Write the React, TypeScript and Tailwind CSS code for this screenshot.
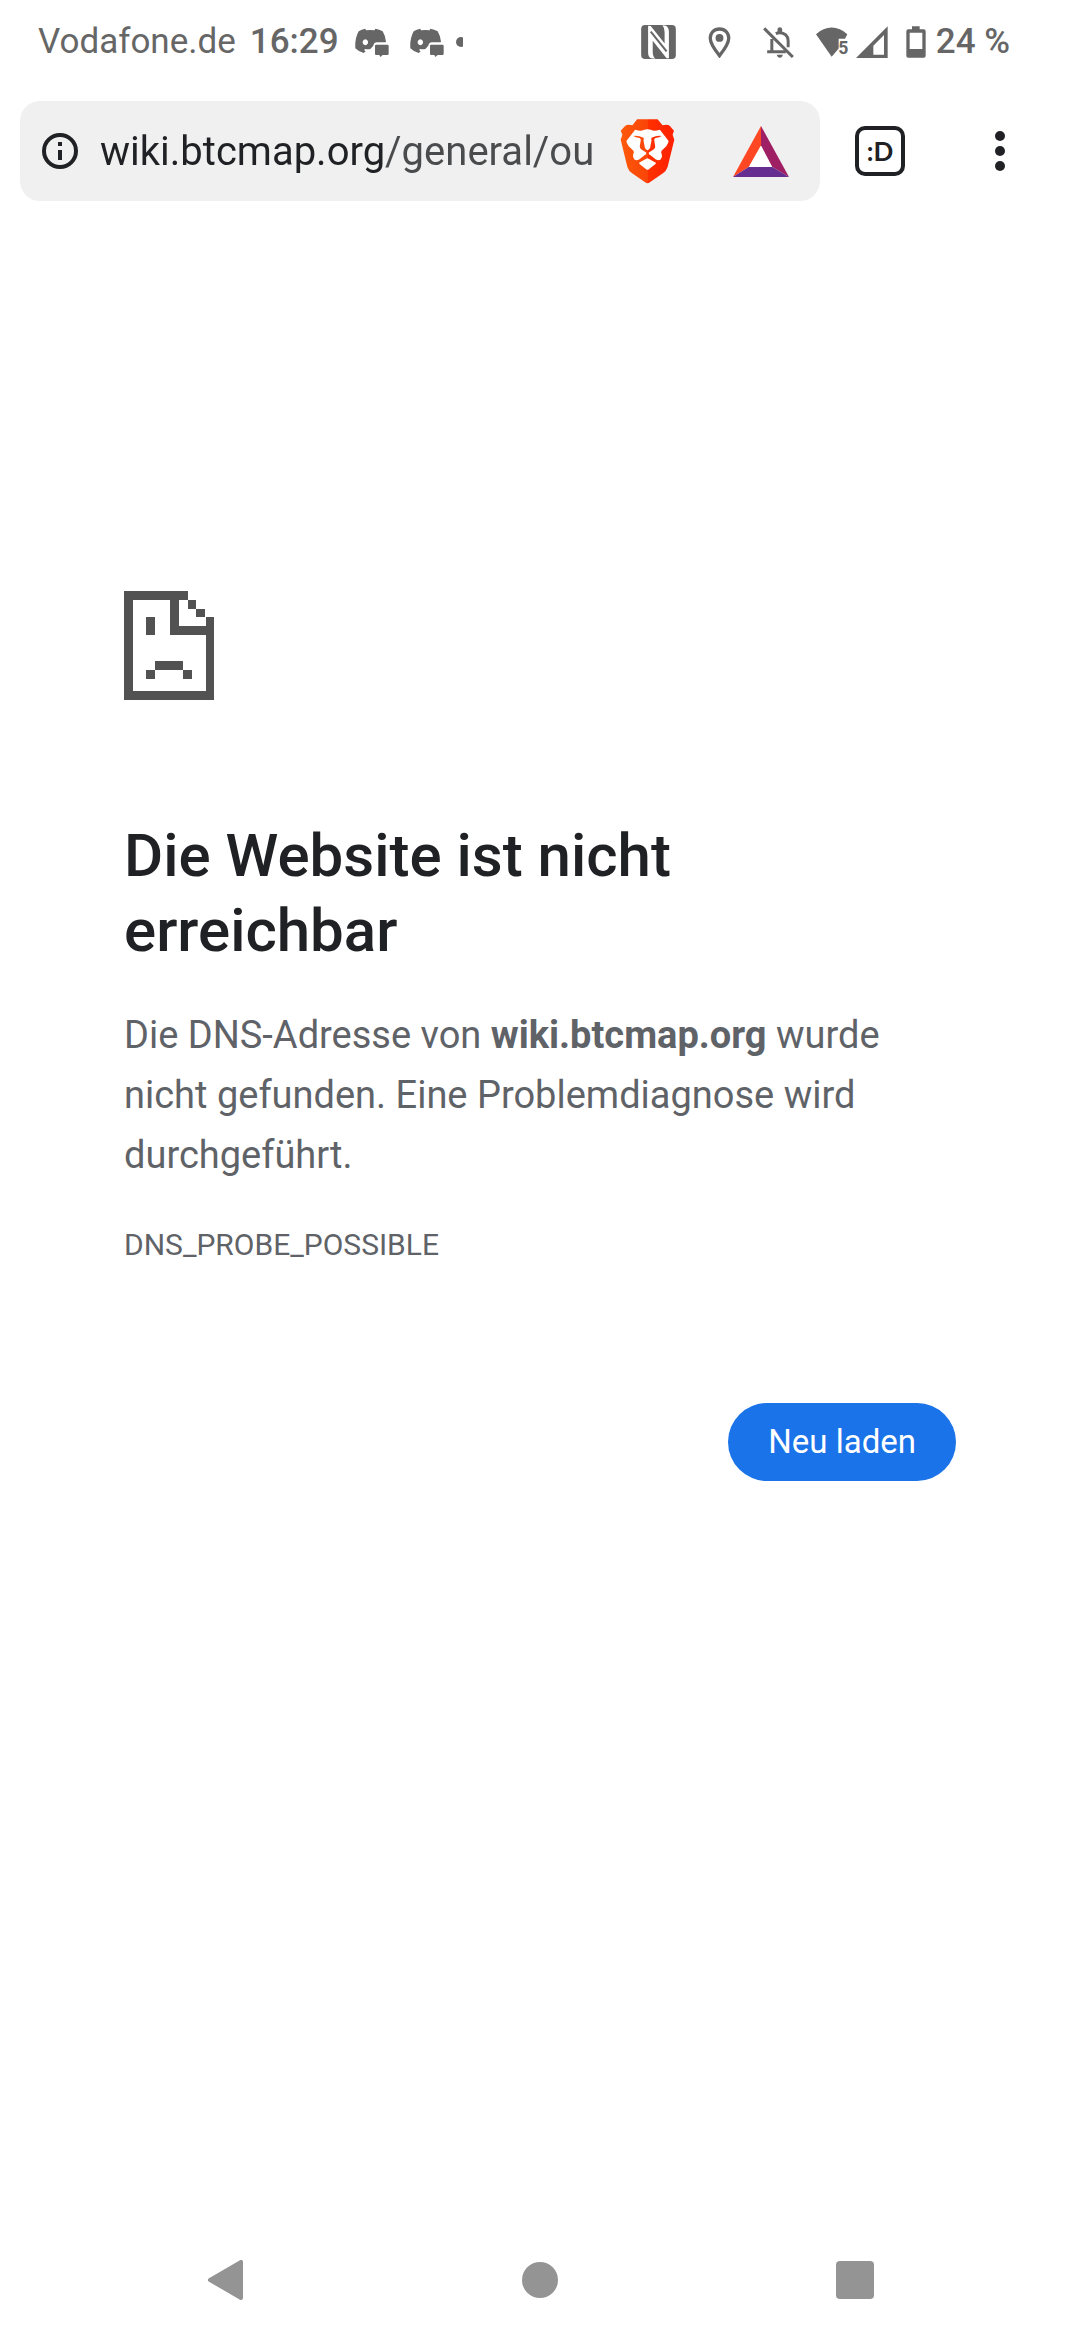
import { useState } from 'react';

function DiscordIcon() {
  return (
    <svg viewBox="46 51 102 87" className="h-[29px] w-[34px]" fill="currentColor" aria-hidden="true">
      <path
        fillRule="evenodd"
        d="M77 53 L79 58 Q92 56 105 58 L107 53 Q119 55 129 61 Q137 74 139 92 L138 94 L112 94 Q102 95 101 104 L92 114 Q86 116 77 114 L73 117 L78 121 L72 126 Q57 122 47 112 Q45 83 57 61 Q66 55 77 53 Z M77 85 a8 9 0 1 0 0.1 0 Z"
      />
      <path d="M109 101 H143 Q147 101 147 105 V128 Q147 132 143 132 H129 L122 138 L119 132 H109 Q106 132 106 128 V105 Q106 101 109 101 Z" />
    </svg>
  );
}

function NfcIcon() {
  return (
    <svg viewBox="63 36 105 103" className="h-[34px] w-[35px]" aria-hidden="true">
      <rect x="63" y="36" width="105" height="103" rx="12" fill="#666" />
      <path d="M84 38 L92 39 L134 92 V58 Q134 44 127 37 L138 38 Q147 44 147 56 V137 L140 137 L98 84 V118 Q98 132 106 138 L93 137 Q84 132 84 120 Z" fill="#fff" />
      <path d="M92 56 L140 116" stroke="#666" strokeWidth="6" />
    </svg>
  );
}

function PinIcon() {
  return (
    <svg viewBox="266 44 68 94" className="h-[31px] w-[23px]" aria-hidden="true">
      <path d="M300 50 C283 50 272 62 272 78 C272 96 290 118 300 131 C310 118 328 96 328 78 C328 62 317 50 300 50 Z" fill="none" stroke="#666" strokeWidth="10" />
      <circle cx="300" cy="77" r="12" fill="#666" />
    </svg>
  );
}

function BellOffIcon() {
  return (
    <svg viewBox="429 46 92 93" className="h-[31px] w-[31px]" aria-hidden="true">
      <path d="M455 82 V119 M441 120 H497 M504 107 V87 C504 73 493 63 479 63 C474 63 471 64 467 66" fill="none" stroke="#666" strokeWidth="9" />
      <path d="M472 63 V53 Q472 47 479 47 Q486 47 486 53 V63 Z M470 129 H488 Q486 138 479 138 Q472 138 470 129 Z" fill="#666" />
      <path d="M432 50 L518 136" stroke="#666" strokeWidth="9" />
    </svg>
  );
}

function WifiIcon() {
  return (
    <svg viewBox="48 44 96 92" className="h-[31px] w-[32px] overflow-visible" aria-hidden="true">
      <path d="M48 65 Q70 45 95 45 Q120 45 142 65 L135 79 H116 V108 L95 133 Z" fill="#666" />
      <text x="115" y="124" fill="#666" fontFamily="Roboto, sans-serif" fontSize="53" fontWeight="700">5</text>
    </svg>
  );
}

function SignalIcon() {
  return (
    <svg viewBox="168 42 96 96" className="h-8 w-8" aria-hidden="true">
      <path fillRule="evenodd" d="M263 43 V138 H168 Z M252 69 L220 101 V128 H252 Z" fill="#666" />
    </svg>
  );
}

function BatteryIcon() {
  return (
    <svg viewBox="317 43 60 96" className="h-8 w-5" aria-hidden="true">
      <path fillRule="evenodd" d="M335 44 H358 V53 H370 Q376 53 376 59 V132 Q376 138 370 138 H324 Q318 138 318 132 V59 Q318 53 324 53 H335 Z M328 63 V112 H366 V63 Z" fill="#666" />
    </svg>
  );
}

function BraveIcon() {
  return (
    <svg viewBox="62 56 164 194" className="h-[65px] w-[55px]" aria-hidden="true">
      <defs>
        <linearGradient id="brave" gradientUnits="userSpaceOnUse" x1="64" x2="224" y1="0" y2="0">
          <stop offset="0" stopColor="#ff5a0a" />
          <stop offset="0.5" stopColor="#fa4408" />
          <stop offset="0.51" stopColor="#ff3000" />
          <stop offset="1" stopColor="#ff2000" />
        </linearGradient>
      </defs>
      <path d="M113 57 H174 L189 75 Q204 71 211 77 L223 91 L219 103 L224 118 L204 199 Q200 211 190 218 L151 245 Q144 250 137 245 L98 218 Q88 211 84 199 L64 118 L69 103 L64 91 L77 77 Q85 71 99 75 Z" fill="url(#brave)" />
      <path d="M107 88 Q125 93 132 89 Q144 84 156 89 Q163 93 181 88 L207 122 Q207 129 200 137 L186 151 Q183 155 187 163 Q189 171 183 177 Q177 181 169 177 L151 163 Q144 158 137 163 L119 177 Q111 181 105 177 Q99 171 101 163 Q105 155 102 151 L88 137 Q81 129 81 122 Z" fill="#fff" />
      <path d="M143 173 Q145 173 168 186 Q171 188 167 191 L148 206 Q144 209 140 206 L121 191 Q117 188 120 186 Z" fill="#fff" />
      <path
        fillRule="evenodd"
        d="M102 107 Q114 104 132 112 Q134 115 132 120 L136 141 Q138 147 144 149 Q150 147 152 141 L156 120 Q154 115 156 112 Q174 104 186 107 Q180 112 168 113 Q164 114 164 119 L167 137 Q168 144 162 147 L148 156 V164 H140 V156 L126 147 Q120 144 121 137 L124 119 Q124 114 120 113 Q108 112 102 107 Z"
        fill="url(#brave)"
      />
    </svg>
  );
}

function BatIcon() {
  return (
    <svg viewBox="399 75 168 153" className="h-[51px] w-14" aria-hidden="true">
      <path d="M483 133 L517 198 H446 Z" fill="#fff" />
      <path d="M483 75 V133 L446 198 L399 228 Z" fill="#ff4724" />
      <path d="M483 75 L567 228 L517 198 L483 133 Z" fill="#9e1f63" />
      <path d="M399 228 L446 198 H517 L567 228 Z" fill="#662d91" />
    </svg>
  );
}

function SadPageIcon() {
  return (
    <svg viewBox="42 63 270 327" className="h-[109px] w-[90px]" fill="#525252" shapeRendering="crispEdges" aria-hidden="true">
      <path d="M42 63 H233 V90 H207 V168 H287 V142 H312 V390 H42 Z M68 90 V363 H287 V195 H181 V90 Z" fillRule="evenodd" />
      <path d="M233 90 H259 V116 H233 Z M259 116 H286 V142 H259 Z" />
      <path d="M109 142 H136 V195 H109 Z M136 273 H218 V300 H136 Z M109 300 H136 V326 H109 Z M218 300 H245 V326 H218 Z" />
    </svg>
  );
}

function StatusBar() {
  return (
    <div className="flex h-[84px] items-center justify-between pr-[70px] pl-[38px] text-[35px] text-[#666]">
      <div className="flex items-center">
        <span>Vodafone.de</span>
        <span className="ml-[14px] font-medium">16:29</span>
        <div className="ml-4 flex items-center gap-[21px]">
          <DiscordIcon />
          <DiscordIcon />
        </div>
        <svg viewBox="0 0 7 10" className="ml-3 h-[10px] w-[7px]" aria-hidden="true">
          <circle cx="5" cy="5" r="5" fill="#666" />
        </svg>
      </div>
      <div className="flex items-center">
        <NfcIcon />
        <div className="ml-8 flex items-center gap-8">
          <PinIcon />
          <BellOffIcon />
        </div>
        <div className="ml-[22px] flex items-center gap-2">
          <WifiIcon />
          <SignalIcon />
        </div>
        <div className="ml-[18px] flex items-center gap-[10px]">
          <BatteryIcon />
          <span className="font-medium">24 %</span>
        </div>
      </div>
    </div>
  );
}

function Toolbar() {
  const [url, setUrl] = useState('wiki.btcmap.org/general/ou');

  return (
    <header className="flex items-center px-5 pt-[17px]">
      <form
        onSubmit={(e) => e.preventDefault()}
        className="flex h-[100px] min-w-0 flex-1 items-center rounded-[20px] bg-[#f0f0f0] pr-[31px] pl-[22px]"
      >
        <button type="button" aria-label="Website-Informationen">
          <svg viewBox="0 0 36 36" className="size-9" aria-hidden="true">
            <circle cx="18" cy="18" r="16" fill="none" stroke="#202124" strokeWidth="4" />
            <path d="M16 9 h4 v4 h-4 Z M16 17 h4 v10 h-4 Z" fill="#202124" />
          </svg>
        </button>
        <input
          type="text"
          aria-label="Adresse"
          value={url}
          onChange={(e) => setUrl(e.target.value)}
          className="ml-[22px] min-w-0 flex-1 bg-[linear-gradient(90deg,#202124_286px,#4a4b4d_286px)] bg-clip-text pt-0.5 text-[40px] text-transparent outline-none"
        />
        <div className="ml-6 flex items-center gap-[58px]">
          <button type="button" aria-label="Brave Shields">
            <BraveIcon />
          </button>
          <button type="button" aria-label="Brave Rewards">
            <BatIcon />
          </button>
        </div>
      </form>
      <button type="button" aria-label="Tabs" className="flex w-[120px] justify-center">
        <span className="flex size-[50px] items-center justify-center rounded-[10px] border-4 border-[#202124] font-[Lato] text-[26px] leading-none font-bold text-[#202124]">
          :D
        </span>
      </button>
      <button type="button" aria-label="Menü" className="flex w-[120px] flex-col items-center gap-[5px]">
        <span className="size-[10px] rounded-full bg-[#202124]" />
        <span className="size-[10px] rounded-full bg-[#202124]" />
        <span className="size-[10px] rounded-full bg-[#202124]" />
      </button>
    </header>
  );
}

function NavBar() {
  return (
    <nav className="grid h-[120px] grid-cols-3 place-items-center px-[68px] text-[#949494]">
      <button type="button" aria-label="Zurück">
        <svg viewBox="0 0 35 40" className="h-10 w-[35px]" fill="currentColor" stroke="currentColor" strokeWidth="4" strokeLinejoin="round" aria-hidden="true">
          <path d="M33 2 V38 L2 20 Z" />
        </svg>
      </button>
      <button type="button" aria-label="Startseite" className="size-9 rounded-full bg-current" />
      <button type="button" aria-label="Übersicht" className="size-[38px] rounded-sm bg-current" />
    </nav>
  );
}

export default function App() {
  return (
    <div className="flex min-h-screen flex-col bg-white font-[Roboto,sans-serif]">
      <StatusBar />
      <Toolbar />
      <main className="flex-1 px-[124px] pt-[390px] text-[#5f6368]">
        <SadPageIcon />
        <h1 className="mt-[118px] text-[60px] leading-[75px] font-medium text-[#202124]">
          Die Website ist nicht erreichbar
        </h1>
        <p className="mt-[37px] text-[38px] leading-[60px]">
          Die DNS-Adresse von <strong className="font-bold">wiki.btcmap.org</strong> wurde nicht gefunden. Eine
          Problemdiagnose wird durchgeführt.
        </p>
        <p className="mt-[37px] text-[30px] leading-[45px]">DNS_PROBE_POSSIBLE</p>
        <div className="mt-[136px] flex justify-end">
          <button type="button" className="h-[78px] rounded-full bg-[#1a73e8] px-10 text-[33px] text-white">
            Neu laden
          </button>
        </div>
      </main>
      <NavBar />
    </div>
  );
}
